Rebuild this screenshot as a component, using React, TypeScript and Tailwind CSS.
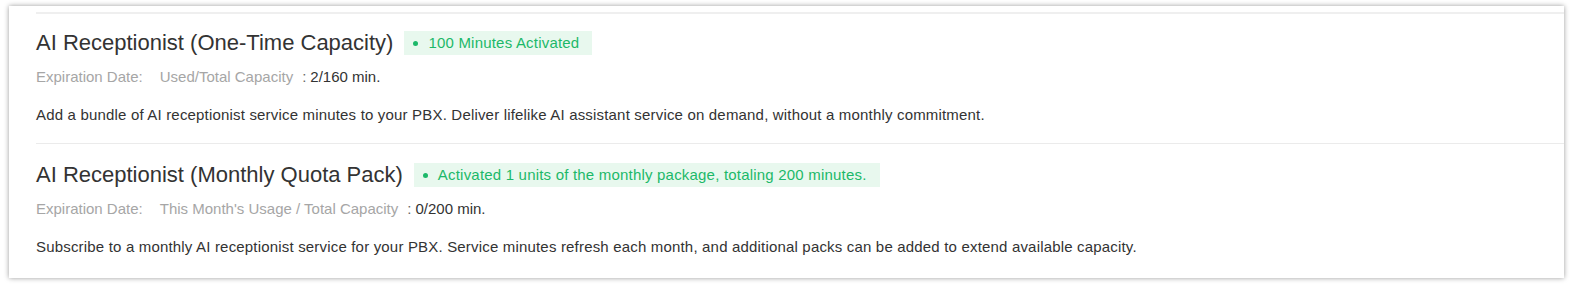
import React from "react";

type Item = {
  title: string;
  badge: string;
  usageLabel: string;
  usageValue: string;
  desc: string;
  pt: string;
};

const items: Item[] = [
  {
    title: "AI Receptionist (One-Time Capacity)",
    badge: "100 Minutes Activated",
    usageLabel: "Used/Total Capacity",
    usageValue: "2/160 min.",
    desc: "Add a bundle of AI receptionist service minutes to your PBX. Deliver lifelike AI assistant service on demand, without a monthly commitment.",
    pt: "pt-[17px]",
  },
  {
    title: "AI Receptionist (Monthly Quota Pack)",
    badge: "Activated 1 units of the monthly package, totaling 200 minutes.",
    usageLabel: "This Month's Usage / Total Capacity",
    usageValue: "0/200 min.",
    desc: "Subscribe to a monthly AI receptionist service for your PBX. Service minutes refresh each month, and additional packs can be added to extend available capacity.",
    pt: "pt-[19px]",
  },
];

function Row({ item, last }: { item: Item; last: boolean }) {
  return (
    <div className={`${item.pt} pb-[18px] ${last ? "" : "border-b border-[#ebebeb]"}`}>
      <div className="flex items-center h-[24px]">
        <h3 className="text-[22px] leading-[24px] text-[#333333] font-normal whitespace-nowrap">
          {item.title}
        </h3>
        <span className="ml-[11px] flex items-center h-[24px] bg-[#e8f8ee] pl-[9px] pr-[13px] text-[15px] leading-[24px] tracking-[0.2px] text-[#1cb869] whitespace-nowrap">
          <span className="w-[5px] h-[5px] rounded-full bg-[#1cb869] mr-[10px]" />
          {item.badge}
        </span>
      </div>
      <div className="mt-[11px] text-[15px] leading-[21px] flex whitespace-nowrap">
        <span className="text-[#a6a6a6] mr-[17px]">Expiration Date:</span>
        <span className="text-[#a6a6a6]">{item.usageLabel}</span>
        <span className="text-[#666666] ml-[9px] mr-[4px]">:</span>
        <span className="text-[#333333]">{item.usageValue}</span>
      </div>
      <p className="mt-[17px] text-[15px] leading-[21px] tracking-[0.18px] text-[#333333] whitespace-nowrap">
        {item.desc}
      </p>
    </div>
  );
}

export default function App() {
  return (
    <div
      className="w-[1574px] h-[285px] bg-white pt-[6px] pl-[9px] overflow-hidden"
      style={{ fontFamily: '"Liberation Sans", Arial, sans-serif' }}
    >
      <div className="w-[1555px] h-[272px] bg-white shadow-[0_0_5px_rgba(0,0,0,0.4)] pt-[6px] pl-[27px] overflow-hidden">
        <div className="h-[2px] bg-[#efefef]" />
        {items.map((it, i) => (
          <Row key={i} item={it} last={i === items.length - 1} />
        ))}
      </div>
    </div>
  );
}
